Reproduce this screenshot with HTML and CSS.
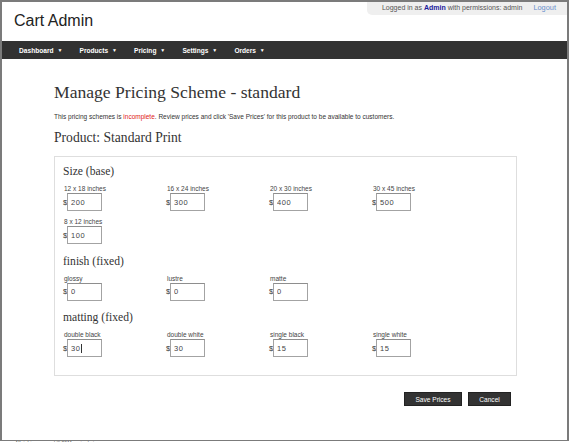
FILE: index.html
```html
<!DOCTYPE html>
<html>
<head>
<meta charset="utf-8">
<link rel="stylesheet" href="styles.css">
</head>
<body>
<div class="frame">
  <header class="header">
    <div class="brand">Cart Admin</div>
    <div class="userbox">
      <span class="who">Logged in as <b class="admin">Admin</b> with permissions: admin</span>
      <a class="logout">Logout</a>
    </div>
  </header>
  <nav class="nav">
    <span class="nav-item">Dashboard <span class="caret">&#9660;</span></span>
    <span class="nav-item">Products <span class="caret">&#9660;</span></span>
    <span class="nav-item">Pricing <span class="caret">&#9660;</span></span>
    <span class="nav-item">Settings <span class="caret">&#9660;</span></span>
    <span class="nav-item">Orders <span class="caret">&#9660;</span></span>
  </nav>
  <main class="content">
    <h1 class="title">Manage Pricing Scheme - standard</h1>
    <p class="notice">This pricing schemes is <span class="warn">incomplete</span>. Review prices and click 'Save Prices' for this product to be available to customers.</p>
    <h2 class="product">Product: Standard Print</h2>
    <div class="panel">
      <h3 class="group">Size (base)</h3>
      <div class="grid">
        <div class="cell"><div class="lbl">12 x 18 inches</div><div class="field"><span class="cur">$</span><input class="inp" value="200"></div></div>
        <div class="cell"><div class="lbl">16 x 24 inches</div><div class="field"><span class="cur">$</span><input class="inp" value="300"></div></div>
        <div class="cell"><div class="lbl">20 x 30 inches</div><div class="field"><span class="cur">$</span><input class="inp" value="400"></div></div>
        <div class="cell"><div class="lbl">30 x 45 inches</div><div class="field"><span class="cur">$</span><input class="inp" value="500"></div></div>
        <div class="cell"><div class="lbl">8 x 12 inches</div><div class="field"><span class="cur">$</span><input class="inp" value="100"></div></div>
      </div>
      <h3 class="group">finish (fixed)</h3>
      <div class="grid">
        <div class="cell"><div class="lbl">glossy</div><div class="field"><span class="cur">$</span><input class="inp" value="0"></div></div>
        <div class="cell"><div class="lbl">lustre</div><div class="field"><span class="cur">$</span><input class="inp" value="0"></div></div>
        <div class="cell"><div class="lbl">matte</div><div class="field"><span class="cur">$</span><input class="inp" value="0"></div></div>
      </div>
      <h3 class="group">matting (fixed)</h3>
      <div class="grid">
        <div class="cell"><div class="lbl">double black</div><div class="field"><span class="cur">$</span><span class="inp focus">30<span class="cursor"></span></span></div></div>
        <div class="cell"><div class="lbl">double white</div><div class="field"><span class="cur">$</span><input class="inp" value="30"></div></div>
        <div class="cell"><div class="lbl">single black</div><div class="field"><span class="cur">$</span><input class="inp" value="15"></div></div>
        <div class="cell"><div class="lbl">single white</div><div class="field"><span class="cur">$</span><input class="inp" value="15"></div></div>
      </div>
    </div>
    <div class="actions">
      <button class="btn save">Save Prices</button>
      <button class="btn cancel">Cancel</button>
    </div>
  </main>
</div>
<footer class="footer">All rights reserved &copy; 2011 cart admin</footer>
</body>
</html>
```
FILE: styles.css
```css
html, body {
  margin: 0;
  padding: 0;
  background: #ffffff;
}
body {
  font-family: "Liberation Sans", Arial, sans-serif;
  color: #333;
}
.frame {
  width: 569px;
  height: 441px;
  box-sizing: border-box;
  border: 2px solid #7b7b7b;
  border-bottom-width: 1px;
  overflow: hidden;
  display: flex;
  flex-direction: column;
}
.header {
  height: 39px;
  display: flex;
  justify-content: space-between;
  align-items: flex-start;
}
.brand {
  font-size: 16px;
  color: #222;
  margin: 9px 0 0 12px;
  line-height: 20px;
}
.userbox {
  background: #efefef;
  border-bottom-left-radius: 5px;
  height: 13px;
  line-height: 12px;
  padding: 0 11px 0 15px;
  font-size: 7px;
  color: #555;
  display: flex;
  gap: 11px;
}
.admin {
  color: #1a1a9c;
}
.logout {
  color: #6a8fcc;
  font-size: 7.4px;
}
.nav {
  height: 18px;
  background: #323232;
  display: flex;
  align-items: center;
  padding-left: 8.5px;
}
.nav-item {
  color: #ffffff;
  font-weight: bold;
  font-size: 6.6px;
  padding: 0 8.6px;
  line-height: 18px;
}
.caret {
  font-size: 5px;
  margin-left: 2px;
  vertical-align: 1px;
}
.content {
  padding: 0 0 0 52px;
  width: 463px;
}
.title {
  font-family: "Liberation Serif", "Times New Roman", serif;
  font-weight: normal;
  font-size: 17.6px;
  color: #333;
  margin: 22px 0 0 0;
  line-height: 22px;
}
.notice {
  font-size: 6.5px;
  margin: 9px 0 0 0;
  line-height: 9px;
  color: #333;
}
.warn {
  color: #e02020;
}
.product {
  font-family: "Liberation Serif", "Times New Roman", serif;
  font-weight: normal;
  font-size: 13.6px;
  color: #333;
  margin: 8px 0 0 0;
  line-height: 17px;
}
.panel {
  margin-top: 10px;
  border: 1px solid #dedede;
  padding: 8px 0 18px 8px;
}
.group {
  font-family: "Liberation Serif", "Times New Roman", serif;
  font-weight: normal;
  font-size: 11.6px;
  color: #333;
  margin: 0;
  line-height: 14px;
}
.group + .grid {
  margin-top: 6px;
}
.grid + .group {
  margin-top: 10.5px;
}
.grid {
  display: grid;
  grid-template-columns: repeat(4, 103px);
  row-gap: 7px;
}
.cell {
  display: flex;
  flex-direction: column;
}
.lbl {
  font-size: 6.5px;
  line-height: 8px;
  color: #444;
  padding-left: 1px;
}
.field {
  display: flex;
  align-items: center;
}
.cur {
  font-size: 7.5px;
  width: 4px;
  color: #333;
}
.inp {
  width: 35px;
  height: 18px;
  box-sizing: border-box;
  border: 1px solid #a3a3a3;
  border-top-color: #8e8e8e;
  padding: 0 0 0 3px;
  margin: 0;
  font-family: "Liberation Sans", Arial, sans-serif;
  font-size: 7.5px;
  letter-spacing: 0.6px;
  color: #444;
  background: #fff;
  outline: none;
  display: flex;
  align-items: center;
}
.cursor {
  display: inline-block;
  width: 1px;
  height: 9px;
  background: #333;
  margin-left: 0;
}
.actions {
  display: flex;
  justify-content: flex-end;
  gap: 6px;
  margin-top: 16px;
  padding-right: 6px;
}
.btn {
  background: #333333;
  color: #fff;
  border: 1px solid #222;
  font-family: "Liberation Sans", Arial, sans-serif;
  font-size: 6.6px;
  height: 14px;
  padding: 0;
  margin: 0;
}
.save {
  width: 58px;
}
.cancel {
  width: 43px;
}
.footer {
  font-size: 5px;
  color: #555;
  padding-left: 15px;
  line-height: 5px;
  height: 1px;
  overflow: hidden;
}
```
